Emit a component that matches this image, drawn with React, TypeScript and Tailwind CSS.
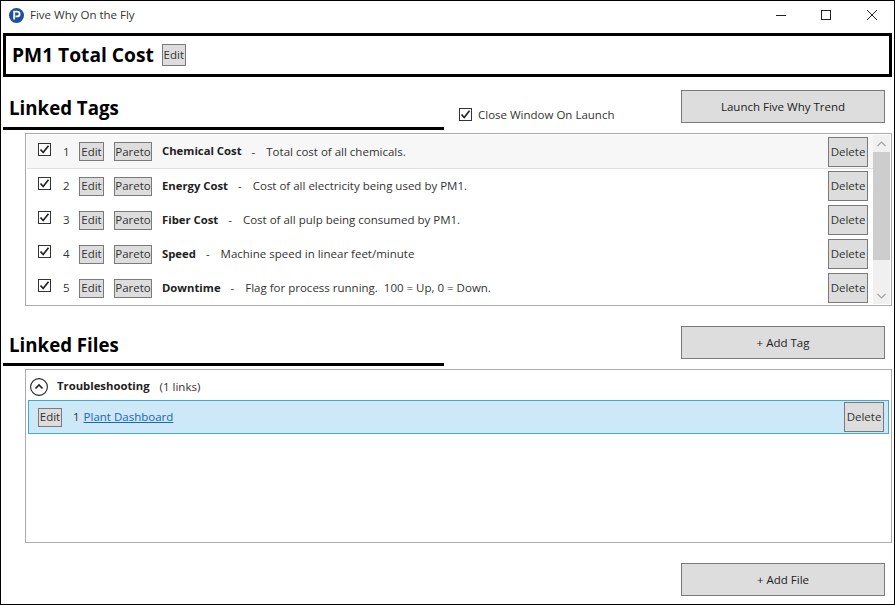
import React from 'react';

const tags = [
  { name: 'Chemical Cost', desc: 'Total cost of all chemicals.' },
  { name: 'Energy Cost', desc: 'Cost of all electricity being used by PM1.' },
  { name: 'Fiber Cost', desc: 'Cost of all pulp being consumed by PM1.' },
  { name: 'Speed', desc: 'Machine speed in linear feet/minute' },
  { name: 'Downtime', desc: 'Flag for process running.  100 = Up, 0 = Down.' },
];

function Check() {
  return (
    <span className="flex h-[13px] w-[13px] shrink-0 items-center justify-center border border-[#333] bg-white">
      <svg width="11" height="11" viewBox="0 0 11 11" fill="none">
        <path d="M1.5 5.5 L4.2 8.5 L9.5 1.8" stroke="#222" strokeWidth="1.7" />
      </svg>
    </span>
  );
}

function SmallBtn({ label, className }: { label: string; className: string }) {
  return (
    <div className={`flex shrink-0 items-center justify-center border border-[#7a7a7a] bg-[#dddddd] text-[#333] ${className}`}>
      {label}
    </div>
  );
}

function BigBtn({ label }: { label: string }) {
  return (
    <div className="flex h-[33px] w-[204px] items-center justify-center border border-[#7a7a7a] bg-[#dddddd] text-[#222]">
      {label}
    </div>
  );
}

function SectionTitle({ label, className }: { label: string; className: string }) {
  return (
    <div className={`w-[441px] border-b-[3px] border-black pl-[6px] text-[18.7px] leading-[27px] font-bold text-black ${className}`}>
      {label}
    </div>
  );
}

export default function App() {
  return (
    <div
      className="flex h-[605px] w-[895px] flex-col overflow-hidden border border-black bg-white pl-[2px] text-[11.5px] text-[#333]"
      style={{ fontFamily: '"Open Sans", "Noto Sans", sans-serif' }}
    >
      {/* title bar */}
      <div className="flex h-[32px] shrink-0 items-center pb-[4px]">
        <svg width="15" height="15" viewBox="0 0 15 15" className="ml-[6px]">
          <circle cx="7.5" cy="7.5" r="7.5" fill="#1d4f9c" />
          <path d="M5.2 11.5 V3.6 H8.2 A2.4 2.4 0 0 1 8.2 8.4 H6.6" fill="none" stroke="#fff" strokeWidth="1.9" />
        </svg>
        <span className="ml-[6px] text-[#333]">Five Why On the Fly</span>
        <div className="ml-auto flex items-center">
          <svg width="10" height="10" viewBox="0 0 10 10" className="mr-[35px]"><path d="M0 5.5 H10" stroke="#222" /></svg>
          <svg width="10" height="10" viewBox="0 0 10 10" className="mr-[36px]"><rect x="0.5" y="0.5" width="9" height="9" fill="none" stroke="#222" /></svg>
          <svg width="10" height="10" viewBox="0 0 10 10" className="mr-[17px]"><path d="M0 0 L10 10 M10 0 L0 10" stroke="#222" /></svg>
        </div>
      </div>

      {/* tile */}
      <div className="mr-[2px] flex h-[44px] shrink-0 items-center border-[3px] border-black pl-[6px]">
        <span className="text-[19.2px] font-bold text-black">PM1 Total Cost</span>
        <SmallBtn label="Edit" className="ml-[8px] h-[22px] w-[24px]" />
      </div>

      {/* linked tags header */}
      <div className="mt-[13px] flex h-[40px] shrink-0 items-start">
        <div className="mt-[4px]"><SectionTitle label="Linked Tags" className="pb-[6px]" /></div>
        <div className="mt-[16px] ml-[15px] flex items-center gap-[6px]">
          <Check />
          <span>Close Window On Launch</span>
        </div>
        <div className="mr-[9px] ml-auto"><BigBtn label="Launch Five Why Trend" /></div>
      </div>

      {/* tags list */}
      <div className="mt-[3px] mr-[2px] ml-[22px] flex h-[173px] shrink-0 border border-[#ababab] p-px">
        <div className="flex min-w-0 flex-1 flex-col">
          {tags.map((t, i) => (
            <div key={t.name} className={`flex h-[34px] shrink-0 items-center ${i === 0 ? 'border-b border-[#e0e0e0] bg-[#f7f7f7]' : ''}`}>
              <div className={`ml-[11px] ${i === 0 ? '-translate-y-[2px]' : '-translate-y-[3px]'}`}><Check /></div>
              <span className="ml-[12px] w-[16px]">{i + 1}</span>
              <SmallBtn label="Edit" className="h-[19px] w-[25px]" />
              <SmallBtn label="Pareto" className="ml-[10px] h-[19px] w-[38px]" />
              <span className="ml-[10px] text-[11.3px] font-bold text-[#222]">{t.name}</span>
              <span className="ml-[10px]">-</span>
              <span className="ml-[11px] whitespace-pre">{t.desc}</span>
              <SmallBtn label="Delete" className="mr-[5px] ml-auto h-[30px] w-[40px]" />
            </div>
          ))}
        </div>
        <div className="flex w-[17px] shrink-0 flex-col bg-[#f0f0f0]">
          <div className="flex h-[17px] items-center justify-center">
            <svg width="9" height="6" viewBox="0 0 9 6"><path d="M0.5 5 L4.5 1 L8.5 5" fill="none" stroke="#a3a3a3" strokeWidth="1.2" /></svg>
          </div>
          <div className="h-[108px] bg-[#cdcdcd]" />
          <div className="mt-auto flex h-[17px] items-center justify-center">
            <svg width="9" height="6" viewBox="0 0 9 6"><path d="M0.5 1 L4.5 5 L8.5 1" fill="none" stroke="#a3a3a3" strokeWidth="1.2" /></svg>
          </div>
        </div>
      </div>

      {/* linked files header */}
      <div className="mt-[20px] flex h-[40px] shrink-0 items-start">
        <div className="mt-[5px]"><SectionTitle label="Linked Files" className="pb-[5px]" /></div>
        <div className="mr-[9px] ml-auto"><BigBtn label="+ Add Tag" /></div>
      </div>

      {/* files list */}
      <div className="mt-[3px] mr-[2px] ml-[22px] flex h-[174px] shrink-0 flex-col border border-[#ababab] pt-[1px] pr-[2px] pl-[2px]">
        <div className="flex h-[29px] shrink-0 items-center pt-[2px]">
          <svg width="18" height="18" viewBox="0 0 18 18" className="ml-[2px]">
            <circle cx="9" cy="9" r="8.4" fill="none" stroke="#222" strokeWidth="1.1" />
            <path d="M5.5 10.5 L9 7 L12.5 10.5" fill="none" stroke="#222" strokeWidth="1.6" />
          </svg>
          <span className="ml-[9px] text-[11.3px] font-bold text-[#222]">Troubleshooting</span>
          <span className="ml-[10px]">(1 links)</span>
        </div>
        <div className="flex h-[34px] shrink-0 items-center border border-[#3fa9d8] bg-[#cde8f6]">
          <SmallBtn label="Edit" className="ml-[9px] h-[19px] w-[24px]" />
          <span className="ml-[11px]">1</span>
          <span className="ml-[4px] text-[#1a66b8] underline">Plant Dashboard</span>
          <SmallBtn label="Delete" className="mr-[4px] ml-auto h-[30px] w-[40px]" />
        </div>
      </div>

      {/* bottom action */}
      <div className="mt-[20px] mr-[9px] self-end"><BigBtn label="+ Add File" /></div>
    </div>
  );
}
